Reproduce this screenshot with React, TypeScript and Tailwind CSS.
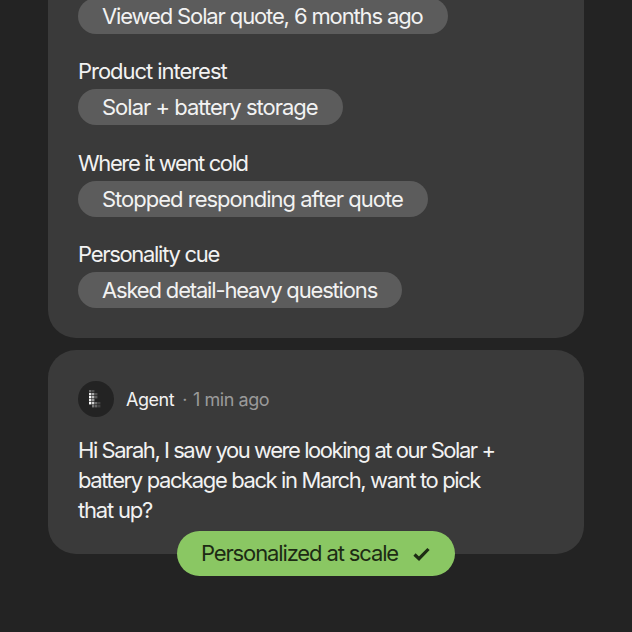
import React from "react";

const rows = [
  {
    label: "Product interest",
    rowClass: "mt-[21px]",
    labelClass: "tracking-[-1.04px]",
    value: "Solar + battery storage",
    valueClass: "tracking-[-1px]",
  },
  {
    label: "Where it went cold",
    rowClass: "mt-[22px]",
    labelClass: "tracking-[-1.38px]",
    value: "Stopped responding after quote",
    valueClass: "tracking-[-1px]",
  },
  {
    label: "Personality cue",
    rowClass: "mt-[21px]",
    labelClass: "tracking-[-1.3px]",
    value: "Asked detail-heavy questions",
    valueClass: "tracking-[-1.17px]",
  },
];

const dots = [
  [0, 0, 0.35], [3, 0, 0.2],
  [0, 3, 0.9], [3, 3, 0.6], [6, 3, 0.2],
  [0, 6, 1], [3, 6, 0.7], [6, 6, 0.25],
  [0, 9, 0.9], [3, 9, 0.55],
  [0, 12, 1], [3, 12, 0.8], [6, 12, 0.35], [9, 12, 0.15],
  [3, 15, 0.4], [6, 15, 0.3], [9, 15, 0.15],
];

function Chip({ className, children }: { className: string; children: React.ReactNode }) {
  return (
    <div className={`w-fit h-9 pl-6 pr-[25px] flex items-center rounded-full bg-[#5c5c5c] text-[22px] text-[#f2f2f2] ${className}`}>
      {children}
    </div>
  );
}

export default function App() {
  return (
    <div className="w-[632px] h-[632px] overflow-hidden bg-[#232323] font-['Inter',sans-serif] px-12">
      {/* top card, scrolled partly out of view */}
      <div className="-mt-[2px] bg-[#3a3a3a] rounded-b-[28px] px-[30px] pb-[30px] flex flex-col">
        <Chip className="tracking-[-1.13px]">Viewed Solar quote, 6 months ago</Chip>
        {rows.map((row) => (
          <div key={row.label} className={`flex flex-col gap-[1px] ${row.rowClass}`}>
            <div className={`h-[33px] flex items-end text-[22px] leading-[33px] text-[#f2f2f2] ${row.labelClass}`}>
              {row.label}
            </div>
            <Chip className={row.valueClass}>{row.value}</Chip>
          </div>
        ))}
      </div>

      {/* agent message */}
      <div className="relative mt-3 h-[204px] bg-[#3a3a3a] rounded-[28px] px-[30px] pt-[31px]">
        <div className="flex items-center gap-3">
          <div className="w-9 h-9 rounded-full bg-[#232323] flex items-center justify-center">
            <svg width="18" height="18" viewBox="0 0 18 18">
              {dots.map(([x, y, o], i) => (
                <rect key={i} x={x + 2} y={y} width="2.4" height="2.4" fill="#fff" opacity={o} />
              ))}
            </svg>
          </div>
          <div className="flex items-center pt-px text-[18px] tracking-[-0.45px]">
            <span className="text-[#f2f2f2]">Agent</span>
            <span className="text-[#9a9a9a] ml-[8px]">·</span>
            <span className="text-[#9a9a9a] ml-[6px]">1 min ago</span>
          </div>
        </div>
        <p className="mt-[18px] w-[430px] text-[22px] leading-[30px] text-[#f2f2f2]">
          <span className="block tracking-[-1.45px]">Hi Sarah, I saw you were looking at our Solar +</span>
          <span className="block tracking-[-1.38px]">battery package back in March, want to pick</span>
          <span className="block tracking-[-1.2px]">that up?</span>
        </p>
        <div className="absolute left-[129px] top-[181px] w-[278px] h-[45px] pr-px rounded-full bg-[#8ac763] flex items-center justify-center gap-[15px] text-[22px] tracking-[-1.13px] text-[#1d2b14]">
          <span>Personalized at scale</span>
          <svg width="17" height="14" viewBox="0 0 17 14" fill="none">
            <path d="M1.5 7.5l4.5 4.2L15.5 2" stroke="#1d2b14" strokeWidth="3.2" />
          </svg>
        </div>
      </div>
    </div>
  );
}
